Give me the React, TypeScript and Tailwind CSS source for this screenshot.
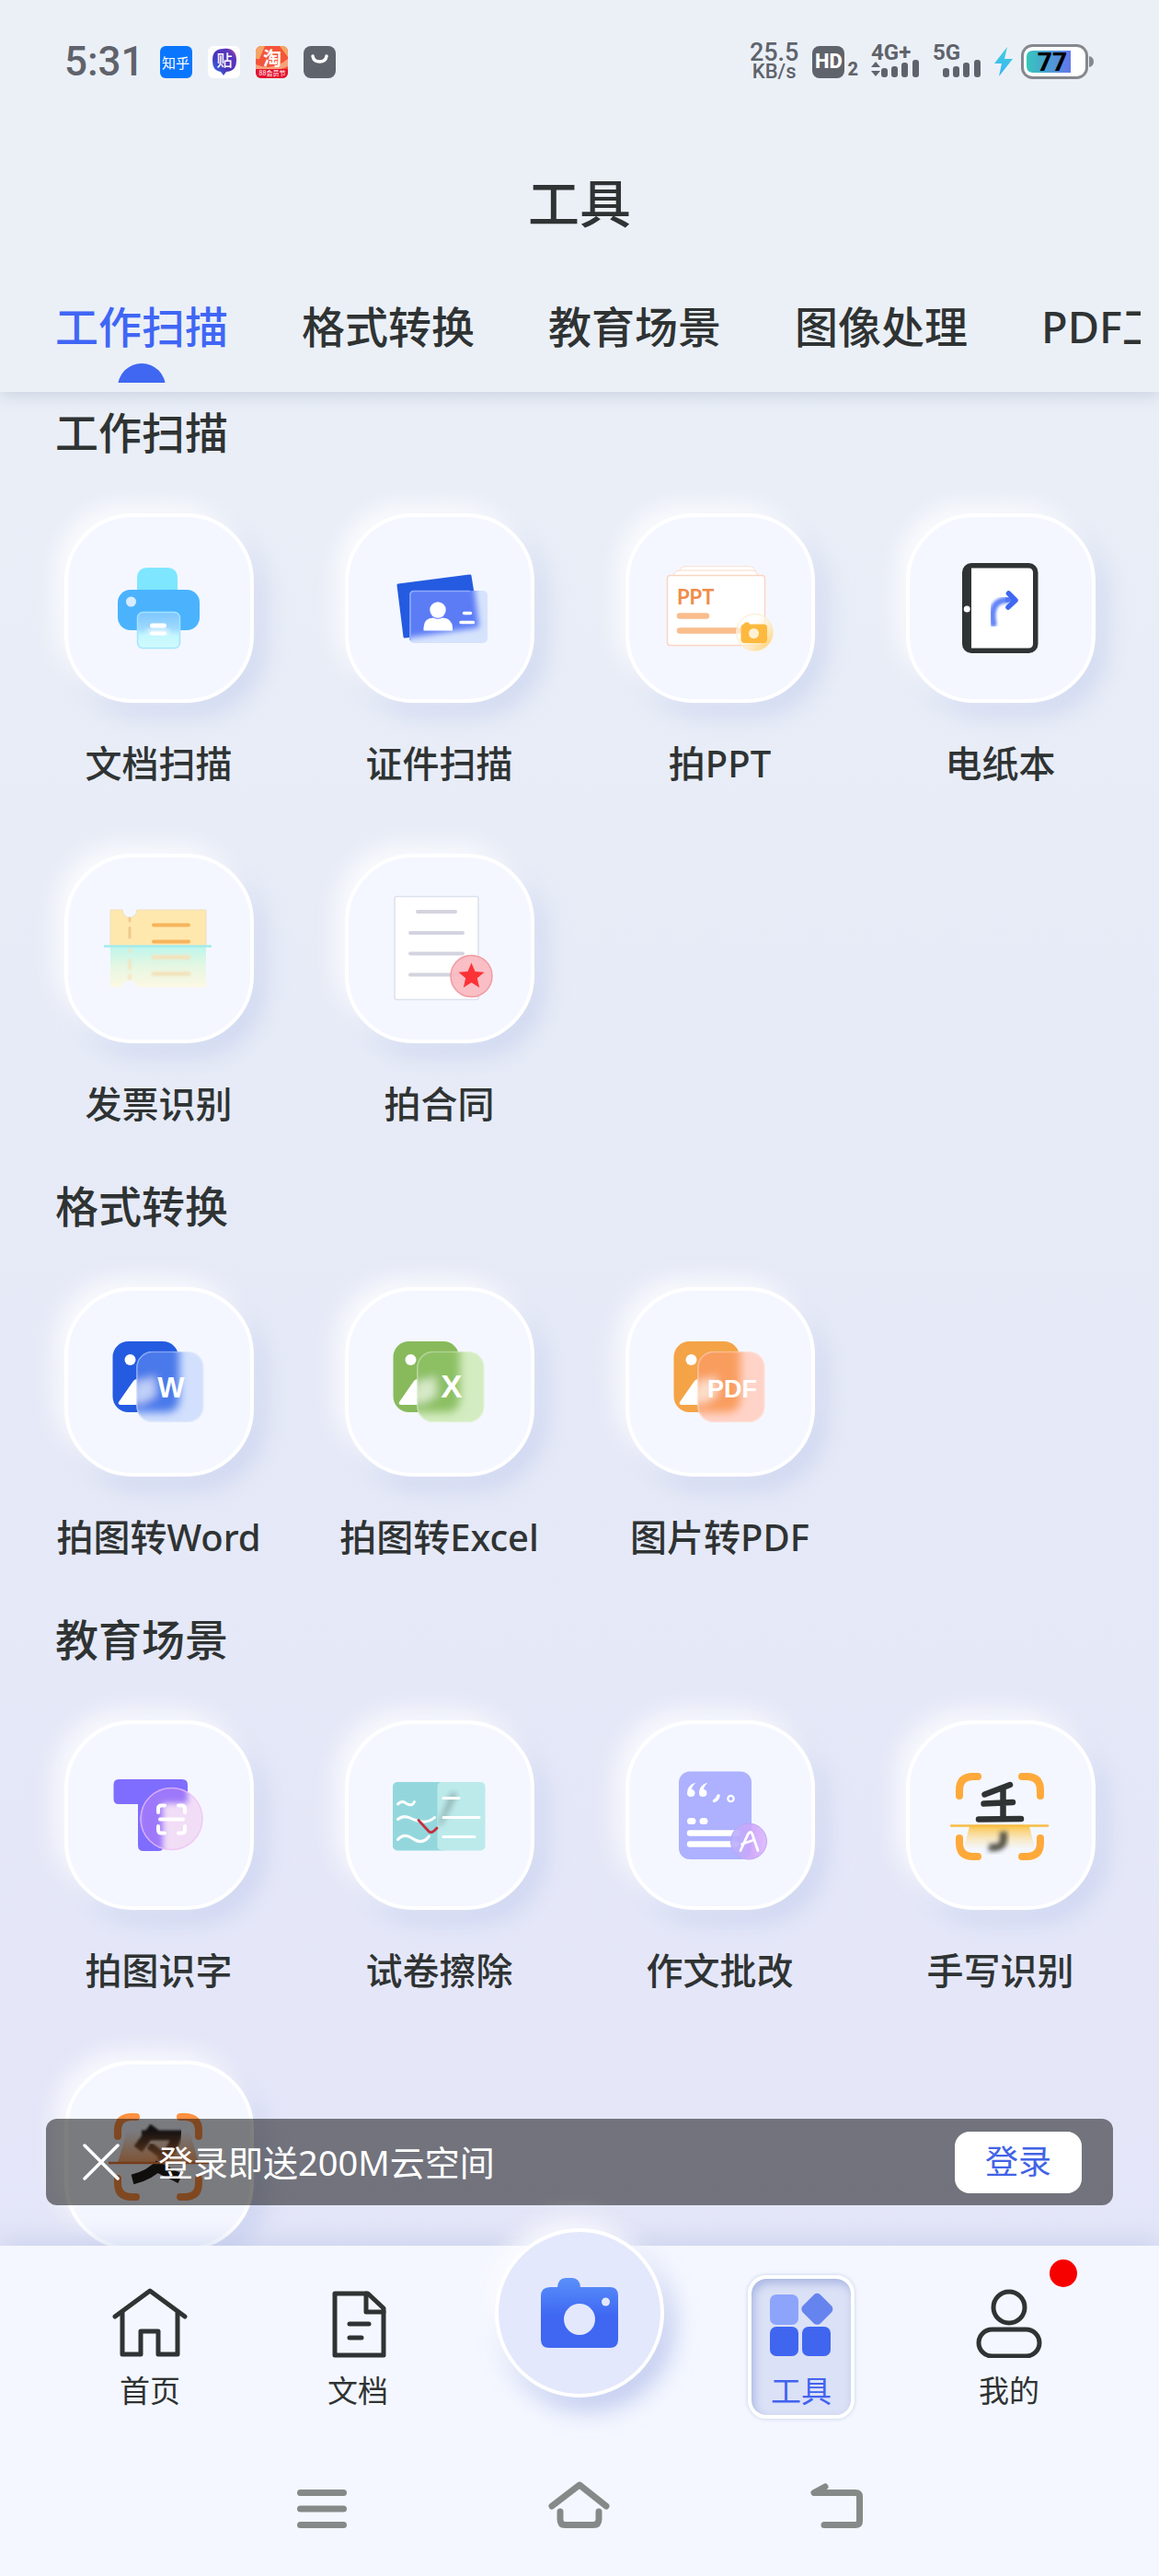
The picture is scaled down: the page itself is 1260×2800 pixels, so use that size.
import React, { useState } from 'react';

interface Tool {
  label?: string;
  icon: React.ReactNode;
}

interface Section {
  title: string;
  tools: Tool[];
}

/* ---------- Tool icons, all drawn on a 206 x 206 tile ---------- */

function TileSvg({ children }: { children: React.ReactNode }) {
  return (
    <svg viewBox="0 0 206 206" className="w-[206px] h-[206px] shrink-0" aria-hidden="true">
      {children}
    </svg>
  );
}

function PrinterIcon() {
  return (
    <TileSvg>
      <defs>
        <linearGradient id="printer-glass" x1="0" y1="0" x2="0" y2="1">
          <stop offset="0" stopColor="#7cc6fd" />
          <stop offset="0.45" stopColor="#9ed9fe" />
          <stop offset="0.65" stopColor="#c3f7fe" />
          <stop offset="1" stopColor="#d0fbfd" />
        </linearGradient>
        <filter id="printer-blur"><feGaussianBlur stdDeviation="3" /></filter>
      </defs>
      <path d="M79 86V71Q79 59 91 59H111Q123 59 123 71V86Z" fill="#7ee6ff" />
      <rect x="58" y="83" width="89" height="44" rx="14" fill="#4bb3fe" />
      <circle cx="72.5" cy="96" r="5.5" fill="#d8ecff" />
      <rect x="79.5" y="107.5" width="46" height="39" rx="6" fill="url(#printer-glass)" stroke="#a5e2ff" strokeWidth="1.5" />
      <rect x="90" y="125" width="24" height="7" rx="3" fill="#fff" fillOpacity="0.7" filter="url(#printer-blur)" />
      <rect x="93" y="119.500" width="18" height="5" rx="2.5" fill="#fff" />
      <rect x="93" y="128.500" width="18" height="4" rx="2" fill="#fff" />
    </TileSvg>
  );
}

function IdCardIcon() {
  return (
    <TileSvg>
      <defs>
        <clipPath id="id-clip"><rect x="70" y="84" width="85" height="57" rx="5" /></clipPath>
        <filter id="id-blur"><feGaussianBlur stdDeviation="3" /></filter>
      </defs>
      <path d="M58 78L136 68L145 124L65 134Z" fill="#245be0" stroke="#245be0" strokeWidth="3" strokeLinejoin="round" />
      <rect x="70" y="84" width="85" height="57" rx="5" fill="#d6e3fc" />
      <g clipPath="url(#id-clip)">
        <path d="M56 78L138 60L146 124L64 136Z" fill="#5b7bf6" filter="url(#id-blur)" />
      </g>
      <path d="M71 138V89Q71 84.500 75 84.500H136" fill="none" stroke="#8ea9fb" strokeWidth="1.5" />
      <circle cx="101" cy="105" r="8.700" fill="#fff" />
      <path d="M85.500 127.500V124Q86 113.500 96 113.500Q101 116 106 113.500Q116.500 114 117 124V127.500Z" fill="#fff" />
      <path d="M129.500 108.500H136.500M126 118.500H139.500" stroke="#fff" strokeWidth="3.500" strokeLinecap="round" />
    </TileSvg>
  );
}

function PptIcon() {
  return (
    <TileSvg>
      <defs>
        <linearGradient id="ppt-glass" x1="0.1" y1="0.1" x2="0.9" y2="0.9">
          <stop offset="0.3" stopColor="#fff" stopOpacity="0.6" />
          <stop offset="1" stopColor="#ffd277" />
        </linearGradient>
      </defs>
      <path d="M59 64Q59 57.500 66 57.500H133Q141 57.500 141 64" fill="#fff" stroke="#fbe0d2" />
      <path d="M52 68Q53 62 60 62H137Q143 62 144 68" fill="#fff" stroke="#fbd9c8" />
      <rect x="45.500" y="67.500" width="106" height="76" rx="3" fill="#fff" stroke="#fbd5c4" strokeWidth="1.5" />
      <text x="56" y="98.500" fontSize="22" fontWeight="700" fill="#f08c49" className="font-[Lato,sans-serif]">PPT</text>
      <path d="M59 111.500H88M59 127.500H124" stroke="#fabd8c" strokeWidth="6.500" strokeLinecap="round" />
      <circle cx="140.500" cy="129.500" r="20" fill="url(#ppt-glass)" stroke="#fdebc9" strokeWidth="1" />
      <path d="M128.500 120.500L130 118.500H134L135 120.500H150Q154 120.500 154 124V137Q154 141 150 141H130Q125.500 141 125.500 137V124Q125.500 121 128.500 120.500Z" fill="#fdb93e" />
      <circle cx="139.500" cy="130.500" r="5.500" fill="#fff1d4" />
    </TileSvg>
  );
}

function PaperPadIcon() {
  return (
    <TileSvg>
      <defs>
        <filter id="pad-blur"><feGaussianBlur stdDeviation="1.6" /></filter>
      </defs>
      <rect x="61" y="54" width="82.500" height="98" rx="10" fill="#2f3333" />
      <path d="M71 59.500H133Q138 59.500 138 64.500V141.500Q138 146.500 133 146.500H71Z" fill="#fff" />
      <circle cx="66.200" cy="104" r="3.500" fill="#fff" />
      <path d="M95 120Q90 95 110 94" fill="none" stroke="#6284f6" strokeWidth="7" strokeLinecap="round" filter="url(#pad-blur)" />
      <path d="M108 94H117" stroke="#5377f4" strokeWidth="5" />
      <path d="M111.500 87L119 94.500L111 102" fill="none" stroke="#3f67f2" strokeWidth="5.500" strokeLinecap="round" strokeLinejoin="round" />
    </TileSvg>
  );
}

function InvoiceIcon() {
  return (
    <TileSvg>
      <defs>
        <linearGradient id="invoice-fade" x1="0" y1="0" x2="0" y2="1">
          <stop offset="0" stopColor="#bff5ec" />
          <stop offset="0.5" stopColor="#e6f7e2" />
          <stop offset="1" stopColor="#fdf8e3" />
        </linearGradient>
        <filter id="invoice-blur"><feGaussianBlur stdDeviation="1.2" /></filter>
      </defs>
      <path d="M50 61H63Q64 69 71 69.500Q78 69 79 61H154V100H50Z" fill="#ffe8ae" stroke="#eedfc0" strokeWidth="1" />
      <path d="M71 70V73M71 80.500V91" stroke="#f0c98e" strokeWidth="3" strokeLinecap="round" />
      <path d="M97 77.500H135M97 95.500H135" stroke="#f6b45c" strokeWidth="4" strokeLinecap="round" />
      <path d="M50 101H154V145H79Q77 137 71 137Q65 137 63 145H50Z" fill="url(#invoice-fade)" />
      <g filter="url(#invoice-blur)" stroke="#f3e3bd" strokeLinecap="round">
        <path d="M97 112.500H135M97 130.500H135" strokeWidth="5" />
        <path d="M71 104V106M71 116V125M71 132V136" strokeWidth="3" />
      </g>
      <path d="M43 100.500H160" stroke="#a3ebec" strokeWidth="2.500" />
    </TileSvg>
  );
}

function ContractIcon() {
  return (
    <TileSvg>
      <rect x="54" y="46.500" width="91" height="112" rx="2" fill="#fff" stroke="#dce1ee" strokeWidth="1.5" />
      <path d="M79 63H120M71 86H128M71 108.500H128M71 131.500H122" stroke="#d3d4df" strokeWidth="4" strokeLinecap="round" />
      <circle cx="137.500" cy="133" r="22.500" fill="#fab9c0" fillOpacity="0.92" stroke="#f29aa1" strokeWidth="1.5" />
      <path d="M137.500 118.500L141.500 128L151.500 128.800L143.800 135.300L146.200 145.500L137.500 140L128.800 145.500L131.200 135.300L123.500 128.800L133.500 128Z" fill="#fb3336" />
    </TileSvg>
  );
}

interface ConvertIconProps {
  id: string;
  base: string;
  glass: string;
  overlap: string;
  text: string;
  size: number;
}

function ConvertIcon({ id, base, glass, overlap, text, size }: ConvertIconProps) {
  return (
    <TileSvg>
      <defs>
        <clipPath id={`${id}-clip`}><rect x="78.500" y="70" width="73" height="77" rx="17" /></clipPath>
        <clipPath id={`${id}-left`}><rect x="50" y="50" width="29" height="100" /></clipPath>
        <filter id={`${id}-blur`} x="-30%" y="-30%" width="160%" height="160%"><feGaussianBlur stdDeviation="5" /></filter>
      </defs>
      <rect x="52.500" y="59" width="71.500" height="77" rx="17" fill={base} />
      <circle cx="71.500" cy="79" r="6" fill="#fff" />
      <path clipPath={`url(#${id}-left)`} d="M59 125L75 102Q78 98 82 103L95 128H61Q58 128 59 125Z" fill="#fff" />
      <rect x="78.500" y="70" width="73" height="77" rx="17" fill={glass} />
      <g clipPath={`url(#${id}-clip)`}>
        <g filter={`url(#${id}-blur)`}>
          <path d="M50 50H125V120Q125 136 110 136H50Z" fill={overlap} />
          <path d="M70 124L80 100L88 102L98 96L100 118L84 127Z" fill="#fff" fillOpacity="0.65" />
        </g>
      </g>
      <rect x="79" y="70.500" width="72" height="76" rx="17" fill="none" stroke="#fff" strokeOpacity="0.3" strokeWidth="1.500" />
      <text x="116" y="120" textAnchor="middle" fontSize={size} fontWeight="700" fill="#fff" className="font-['Liberation_Sans',sans-serif]">{text}</text>
    </TileSvg>
  );
}

function TextScanIcon() {
  return (
    <TileSvg>
      <defs>
        <clipPath id="ocr-clip"><circle cx="116.500" cy="107" r="34" /></clipPath>
        <filter id="ocr-blur"><feGaussianBlur stdDeviation="3" /></filter>
      </defs>
      <path d="M59 64H128Q134 64 134 70V85Q134 91 128 91H108V136Q108 142 102 142H86Q80 142 80 136V91H59Q53.500 91 53.500 85V70Q53.500 64 59 64Z" fill="#7f6dff" />
      <circle cx="116.500" cy="107" r="34" fill="#f2ddf7" />
      <g clipPath="url(#ocr-clip)">
        <path d="M54 64H134V90H107V146H80V90H54Z" fill="#9d78fa" filter="url(#ocr-blur)" />
      </g>
      <circle cx="116.500" cy="107" r="33.500" fill="none" stroke="#f0bdf2" strokeOpacity="0.7" strokeWidth="1.5" />
      <path d="M102 100V96Q102 92.500 105.500 92.500H109M124 92.500H127.500Q131 92.500 131 96V100M131 115V119Q131 122.500 127.500 122.500H124M109 122.500H105.500Q102 122.500 102 119V115" fill="none" stroke="#fff" strokeWidth="4" strokeLinecap="round" />
      <path d="M104 107.500H129" stroke="#fff" strokeWidth="4" strokeLinecap="round" />
    </TileSvg>
  );
}

function ExamIcon() {
  return (
    <TileSvg>
      <defs>
        <clipPath id="exam-clip"><rect x="101" y="67" width="51" height="74" /></clipPath>
        <filter id="exam-blur"><feGaussianBlur stdDeviation="3" /></filter>
      </defs>
      <rect x="52" y="67" width="60" height="74.500" rx="5" fill="#93d7dd" />
      <rect x="100.500" y="67" width="52" height="74.500" rx="5" fill="#bceaeb" />
      <g clipPath="url(#exam-clip)">
        <path d="M100 116L116 78L122 80L106 112Z" fill="#7f9a9c" fillOpacity="0.8" filter="url(#exam-blur)" />
      </g>
      <g fill="none" stroke="#fff" strokeWidth="3" strokeLinecap="round">
        <path d="M57.500 91Q62 86 67 90.500Q73 94 75.500 88.500" />
        <path d="M57.500 107.500Q64 102 73 107Q88 114 97.500 105.500" />
        <path d="M57.500 129.500Q64 122 73 128Q84 136 91.500 126" />
        <path d="M107 84.500H124M107 105.500H146M107 126.500H141" />
      </g>
      <path d="M80 108.500L91 120.500Q94 124 100 117" fill="none" stroke="#c5303f" strokeWidth="2.800" strokeLinecap="round" />
    </TileSvg>
  );
}

function EssayIcon() {
  return (
    <TileSvg>
      <defs>
        <linearGradient id="essay-glass" x1="0" y1="0" x2="1" y2="0">
          <stop offset="0.1" stopColor="#b9b0fd" />
          <stop offset="0.6" stopColor="#cda4fb" />
          <stop offset="1" stopColor="#deb8fc" />
        </linearGradient>
      </defs>
      <rect x="58" y="55.500" width="79" height="95.500" rx="12" fill="#adb1ff" />
      <path d="M75 68Q67 71 67 79Q67 83 71 83Q75.500 83 75.500 79Q75.500 75.500 72 75Q72.500 71 76 68.500Z" fill="#fff" />
      <path d="M88 68Q80 71 80 79Q80 83 84 83Q88.500 83 88.500 79Q88.500 75.500 85 75Q85.500 71 89 68.500Z" fill="#fff" />
      <path d="M101 82Q100 86 96.500 87.500" fill="none" stroke="#fff" strokeWidth="3.500" strokeLinecap="round" />
      <circle cx="114.500" cy="85" r="3.200" fill="none" stroke="#fff" strokeWidth="2.200" />
      <path d="M70.500 109.500H73M84 109.500H86" stroke="#fff" strokeWidth="7" strokeLinecap="round" />
      <path d="M70 122.500H122M70 134.500H120" stroke="#fff" strokeWidth="6.500" strokeLinecap="round" />
      <circle cx="134" cy="131.500" r="19.500" fill="url(#essay-glass)" fillOpacity="0.9" stroke="#bda2f5" strokeWidth="1" />
      <path d="M125 141.500L133 124Q136 119 138 124L144 141.500M126.500 134.500L138 130.500" fill="none" stroke="#fff" strokeWidth="2.800" strokeLinecap="round" />
    </TileSvg>
  );
}

function Brackets({ color }: { color: string }) {
  return (
    <path
      d="M58 82V76Q58 61 73 61H78M126 61H131Q146 61 146 76V82M146 128V133Q146 148 131 148H126M78 148H73Q58 148 58 133V128"
      fill="none"
      stroke={color}
      strokeWidth="8"
      strokeLinecap="round"
    />
  );
}

function HandwritingIcon() {
  return (
    <TileSvg>
      <defs>
        <linearGradient id="hand-glow" x1="0" y1="0" x2="0" y2="1">
          <stop offset="0" stopColor="#fbc64e" />
          <stop offset="1" stopColor="#fbe3a8" stopOpacity="0.1" />
        </linearGradient>
        <filter id="hand-blur" x="-40%" y="-40%" width="180%" height="180%"><feGaussianBlur stdDeviation="2.5" /></filter>
      </defs>
      <path d="M69 115H134L140 139H63Z" fill="url(#hand-glow)" />
      <Brackets color="#ffa93a" />
      <path d="M85.500 80.500L113 70M84.500 90.500L116 89M105.500 74V105M79 107.500L125 107" fill="none" stroke="#2f3333" strokeWidth="6.500" strokeLinecap="round" />
      <path d="M106 121V129Q106 140 90 138" fill="none" stroke="#3a3a2e" strokeOpacity="0.85" strokeWidth="8" filter="url(#hand-blur)" />
      <path d="M49 114.500H154" stroke="#f8bd45" strokeWidth="2.500" strokeLinecap="round" />
    </TileSvg>
  );
}

function GlyphScanIcon() {
  return (
    <TileSvg>
      <defs>
        <linearGradient id="glyph-glow" x1="0" y1="0" x2="0" y2="1">
          <stop offset="0" stopColor="#ff9142" stopOpacity="0" />
          <stop offset="1" stopColor="#ff9142" stopOpacity="0.8" />
        </linearGradient>
        <filter id="glyph-blur"><feGaussianBlur stdDeviation="1.2" /></filter>
      </defs>
      <Brackets color="#ff9142" />
      <path d="M98 72L80 96M84 81H122Q118 98 104 110" fill="none" stroke="#2b2320" strokeWidth="11" filter="url(#glyph-blur)" />
      <path d="M92 92L108 104" stroke="#2b2320" strokeWidth="8" filter="url(#glyph-blur)" />
      <path d="M68 76H136L146 111H58Z" fill="url(#glyph-glow)" />
      <path d="M104 112Q94 124 74 129M98 114L126 128" fill="none" stroke="#1f1c1b" strokeWidth="11" />
      <path d="M48 111H158" stroke="#e87b35" strokeWidth="2.500" />
    </TileSvg>
  );
}

/* ---------- Data ---------- */

const tabs = ['工作扫描', '格式转换', '教育场景', '图像处理', 'PDF工具'];

const sections: Section[] = [
  {
    title: '工作扫描',
    tools: [
      { label: '文档扫描', icon: <PrinterIcon /> },
      { label: '证件扫描', icon: <IdCardIcon /> },
      { label: '拍PPT', icon: <PptIcon /> },
      { label: '电纸本', icon: <PaperPadIcon /> },
      { label: '发票识别', icon: <InvoiceIcon /> },
      { label: '拍合同', icon: <ContractIcon /> },
    ],
  },
  {
    title: '格式转换',
    tools: [
      { label: '拍图转Word', icon: <ConvertIcon id="word" base="#245be0" glass="#d2e0fd" overlap="#4a79ea" text="W" size={31} /> },
      { label: '拍图转Excel', icon: <ConvertIcon id="excel" base="#88ba5c" glass="#d3ecc1" overlap="#8cc063" text="X" size={35} /> },
      { label: '图片转PDF', icon: <ConvertIcon id="pdf" base="#f4a447" glass="#ffd3c8" overlap="#f99d5f" text="PDF" size={27} /> },
    ],
  },
  {
    title: '教育场景',
    tools: [
      { label: '拍图识字', icon: <TextScanIcon /> },
      { label: '试卷擦除', icon: <ExamIcon /> },
      { label: '作文批改', icon: <EssayIcon /> },
      { label: '手写识别', icon: <HandwritingIcon /> },
      { icon: <GlyphScanIcon /> },
    ],
  },
];

/* ---------- Status bar ---------- */

function SignalBars({ arrows }: { arrows?: boolean }) {
  return (
    <svg viewBox="0 0 52 20" className="w-[52px] h-5" fill="#5f636b" aria-hidden="true">
      {arrows && <path d="M0 8L5 2L10 8ZM0 12H10L5 18Z" />}
      <rect x="11" y="9" width="7" height="10" rx="3" />
      <rect x="22" y="7" width="7" height="12" rx="3" />
      <rect x="33" y="3" width="7" height="16" rx="3" />
      <rect x="45" y="0" width="7" height="19" rx="3" />
    </svg>
  );
}

function StatusBar() {
  return (
    <div className="h-[134px] px-[70px] flex items-center justify-between text-[#5f636b] font-[Roboto,sans-serif]">
      <div className="flex items-center gap-[17px]">
        <span className="text-[44px] leading-none font-medium">5:31</span>
        <span className="w-[35px] h-[35px] rounded-md bg-[#0a76ff] text-white text-[15px] leading-none flex items-center justify-center font-['Noto_Sans_CJK_SC',sans-serif]">
          知乎
        </span>
        <span className="w-[35px] h-[35px] rounded-md bg-white flex items-center justify-center">
          <svg viewBox="0 0 35 35" className="w-[35px] h-[35px]">
            <defs>
              <linearGradient id="tieba" x1="0" y1="1" x2="1" y2="0">
                <stop offset="0" stopColor="#2f7bf5" />
                <stop offset="0.4" stopColor="#4b35b8" />
                <stop offset="0.8" stopColor="#5a36c0" />
                <stop offset="1" stopColor="#f2626e" />
              </linearGradient>
            </defs>
            <path d="M17 3C26 2 31 6 31 15C31 25 27 27 20 28L17 32L14 28C8 27 5 24 5 15C5 7 9 3 17 3Z" fill="url(#tieba)" />
            <text x="18" y="22" fontSize="17" fontWeight="500" textAnchor="middle" fill="#fff" className="font-['Noto_Sans_CJK_SC',sans-serif]">贴</text>
          </svg>
        </span>
        <span className="w-[35px] h-[35px] rounded-md overflow-hidden">
          <svg viewBox="0 0 35 35" className="w-[35px] h-[35px]">
            <rect width="35" height="35" fill="#f4553a" />
            <path d="M0 0H10L4 14H0ZM26 0H35V12Z" fill="#f5a565" />
            <path d="M0 20Q18 28 35 14V22Q18 30 0 26Z" fill="#f8a27c" />
            <rect y="25" width="35" height="10" fill="#e4142f" />
            <text x="18" y="21" fontSize="20" fontWeight="700" textAnchor="middle" fill="#fff" className="font-['Noto_Sans_CJK_SC',sans-serif]">淘</text>
            <text x="18" y="32" fontSize="7" textAnchor="middle" fill="#fff" className="font-['Noto_Sans_CJK_SC',sans-serif]">88会员节</text>
          </svg>
        </span>
        <span className="w-[35px] h-[35px] rounded-lg bg-[#5f636b]">
          <svg viewBox="0 0 35 35" className="w-[35px] h-[35px]">
            <path d="M10 11Q11 17 17.500 17Q24 17 25 11" fill="none" stroke="#fff" strokeWidth="3.500" strokeLinecap="round" />
          </svg>
        </span>
      </div>

      <div className="flex items-center">
        <div className="flex flex-col items-center font-medium mr-[15px]">
          <span className="text-[27px] leading-[22px]">25.5</span>
          <span className="text-[22px] leading-5">KB/s</span>
        </div>
        <div className="flex items-end mr-[14px]">
          <span className="w-[35px] h-[35px] rounded-lg bg-[#5f636b] text-white text-[22px] leading-none font-extrabold flex items-center justify-center">HD</span>
          <span className="ml-[3px] text-[20px] leading-5 font-extrabold">2</span>
        </div>
        <div className="flex flex-col mr-[15px]">
          <span className="text-[24px] leading-4 font-bold">4G+</span>
          <SignalBars arrows />
        </div>
        <div className="flex flex-col mr-[15px]">
          <span className="text-[24px] leading-4 font-bold">5G</span>
          <SignalBars />
        </div>
        <svg viewBox="0 0 20 32" className="w-5 h-8 mr-[9px]">
          <defs>
            <linearGradient id="bolt" x1="0" y1="0" x2="0" y2="1">
              <stop offset="0" stopColor="#41cfd8" />
              <stop offset="1" stopColor="#36b3fb" />
            </linearGradient>
          </defs>
          <path d="M14 0L0 18H8L5 32L20 13H11Z" fill="url(#bolt)" />
        </svg>
        <svg viewBox="0 0 80 38" className="w-20 h-[38px]">
          <defs>
            <linearGradient id="battery" x1="0" y1="0" x2="1" y2="0">
              <stop offset="0" stopColor="#35c6bc" />
              <stop offset="1" stopColor="#6376ea" />
            </linearGradient>
          </defs>
          <rect x="1.500" y="1.500" width="70" height="35" rx="11" fill="#fff" stroke="#85888e" strokeWidth="3" />
          <path d="M13 7H54V31H13Q6 31 6 24V14Q6 7 13 7Z" fill="url(#battery)" />
          <path d="M74 13Q79 14 79 19Q79 24 74 25Z" fill="#85888e" />
          <text x="34" y="29" fontSize="28" fontWeight="800" textAnchor="middle" fill="#000">77</text>
        </svg>
      </div>
    </div>
  );
}

/* ---------- Content ---------- */

function ToolButton({ tool }: { tool: Tool }) {
  return (
    <button type="button" className="flex flex-col items-center">
      <span className="w-[206px] h-[206px] flex items-center justify-center rounded-[74px] border-4 border-white bg-[#f4f7ff] shadow-[-10px_-10px_26px_rgba(255,255,255,0.8),12px_14px_24px_rgba(176,190,232,0.4)]">
        {tool.icon}
      </span>
      {tool.label && <span className="mt-[34px] text-[40px] leading-[64px] font-medium whitespace-nowrap">{tool.label}</span>}
    </button>
  );
}

function LoginBanner({ onClose }: { onClose: () => void }) {
  return (
    <div className="absolute inset-x-[50px] bottom-11 h-[94px] pl-10 pr-[34px] flex items-center rounded-xl bg-black/50 text-white">
      <button type="button" aria-label="关闭" onClick={onClose}>
        <svg viewBox="0 0 40 40" className="w-10 h-10" fill="none" stroke="currentColor" strokeWidth="3.500" strokeLinecap="round">
          <path d="M2 2L38 38M38 2L2 38" />
        </svg>
      </button>
      <p className="ml-[42px] flex-1 text-[38px] leading-[60px]">登录即送200M云空间</p>
      <button type="button" className="w-[138px] h-[67px] rounded-2xl bg-white text-[#4263e6] text-[36px] leading-none">
        登录
      </button>
    </div>
  );
}

/* ---------- Bottom navigation ---------- */

function HomeIcon() {
  return (
    <svg viewBox="0 0 82 76" className="w-[82px] h-[76px]" fill="none" stroke="#2f3333" strokeWidth="5" strokeLinecap="round" strokeLinejoin="round">
      <path d="M3 31L41 3L79 31" />
      <path d="M11 27V72H31V47H50V72H71V27" />
    </svg>
  );
}

function DocIcon() {
  return (
    <svg viewBox="0 0 82 76" className="w-[82px] h-[76px]" fill="none" stroke="#2f3333" strokeWidth="5" strokeLinecap="round" strokeLinejoin="round">
      <path d="M16 6H52L69 22V73H16Z" />
      <path d="M50 6V26H69" />
      <path d="M32 39H53M32 54H45" />
    </svg>
  );
}

function ToolsIcon() {
  return (
    <svg viewBox="0 0 82 76" className="w-[82px] h-[76px]">
      <rect x="7" y="7" width="31" height="33" rx="7" fill="#8da4fb" />
      <rect x="45" y="9" width="27" height="27" rx="5" fill="#6584ee" transform="rotate(45 58 22.500)" />
      <rect x="7" y="42" width="31" height="32" rx="7" fill="#4066f0" />
      <rect x="42" y="42" width="31" height="32" rx="7" fill="#4066f0" />
    </svg>
  );
}

function UserIcon() {
  return (
    <svg viewBox="0 0 82 76" className="w-[82px] h-[76px]" fill="none" stroke="#2f3333" strokeWidth="5">
      <circle cx="41" cy="21" r="17" />
      <rect x="8" y="45" width="66" height="29" rx="14.500" />
    </svg>
  );
}

interface NavItemProps {
  label: string;
  icon: React.ReactNode;
  active?: boolean;
  badge?: boolean;
}

function NavItem({ label, icon, active, badge }: NavItemProps) {
  return (
    <div className="flex-1 flex justify-center">
      <button
        type="button"
        className={
          active
            ? 'relative w-[116px] h-[156px] flex flex-col items-center rounded-[20px] border-4 border-white bg-[#dbe1f6] text-[#4263f0] shadow-[0_0_4px_rgba(190,200,225,0.9),inset_3px_5px_10px_rgba(150,165,220,0.7)]'
            : 'relative w-[116px] h-[156px] flex flex-col items-center border-4 border-transparent'
        }
      >
        <span className="mt-[10px]">{icon}</span>
        <span className="mt-[12px] text-[33px] leading-[48px] whitespace-nowrap">{label}</span>
        {badge && <span className="absolute -right-5 -top-[21px] w-[30px] h-[30px] rounded-full bg-[#f70000]" />}
      </button>
    </div>
  );
}

function BottomNav() {
  return (
    <footer className="relative bg-[#f4f7ff] shadow-[0_-4px_24px_rgba(176,190,225,0.5)]">
      <nav className="flex items-start pt-8 px-[50px]">
        <NavItem label="首页" icon={<HomeIcon />} />
        <NavItem label="文档" icon={<DocIcon />} />
        <div className="w-64 flex justify-center">
          <button
            type="button"
            aria-label="拍照"
            className="-mt-[51px] w-[184px] h-[184px] flex items-center justify-center rounded-full border-4 border-white bg-[#e4e8fc] shadow-[-6px_-10px_24px_rgba(255,255,255,0.8),10px_14px_26px_rgba(150,165,225,0.55)]"
          >
            <svg viewBox="0 0 84 76" className="w-[84px] h-[76px]">
              <defs>
                <linearGradient id="camera" x1="0" y1="0" x2="0" y2="1">
                  <stop offset="0" stopColor="#5990fa" />
                  <stop offset="0.55" stopColor="#3f67f2" />
                </linearGradient>
              </defs>
              <path d="M10 10H18Q19 0 27 0H34Q42 0 43 10H75Q84 10 84 19V67Q84 76 75 76H9Q0 76 0 67V20Q0 10 10 10Z" fill="url(#camera)" />
              <circle cx="42" cy="45" r="17" fill="#e4e8fc" />
              <circle cx="70.500" cy="26" r="4.500" fill="#e4e8fc" />
            </svg>
          </button>
        </div>
        <NavItem label="工具" icon={<ToolsIcon />} active />
        <NavItem label="我的" icon={<UserIcon />} badge />
      </nav>

      {/* Android system keys */}
      <div className="grid grid-cols-3 justify-items-center px-[210px] pt-[68px] pb-[49px]">
        <button type="button" aria-label="最近任务">
          <svg viewBox="0 0 68 54" className="w-[68px] h-[54px]" stroke="#858a89" strokeWidth="7" strokeLinecap="round">
            <path d="M10.500 12.500H57.500M10.500 30H57.500M10.500 47.500H57.500" />
          </svg>
        </button>
        <button type="button" aria-label="主屏幕">
          <svg viewBox="0 0 68 54" className="w-[68px] h-[54px]" fill="none" stroke="#858a89" strokeWidth="7" strokeLinecap="round" strokeLinejoin="round">
            <path d="M4 27L34 4L63 27" />
            <path d="M13 33V41Q13 47.500 18 47.500H49Q55 47.500 55 41V33" />
          </svg>
        </button>
        <button type="button" aria-label="返回">
          <svg viewBox="0 0 68 54" className="w-[68px] h-[54px]" fill="none" stroke="#858a89" strokeWidth="7" strokeLinecap="round" strokeLinejoin="round">
            <path d="M21 6L9 12.500H54Q58.500 12.500 58.500 17V43Q58.500 47.500 54 47.500H20" />
          </svg>
        </button>
      </div>
    </footer>
  );
}

export default function App() {
  const [activeTab, setActiveTab] = useState(0);
  const [showBanner, setShowBanner] = useState(true);

  return (
    <div className="h-screen flex flex-col bg-linear-to-b from-[#ebf0f7] via-[#e6eaf7] to-[#e3e4f9] text-[#2f3333] font-['Noto_Sans','Noto_Sans_CJK_SC',sans-serif]">
      <header className="relative z-10 bg-[#ebf0f7] pb-[10px] shadow-[0_4px_16px_rgba(120,130,155,0.25)]">
        <StatusBar />
        <h1 className="h-[172px] flex items-center justify-center text-[56px] leading-none font-medium">工具</h1>
        <div className="mx-5 overflow-hidden">
          <div className="flex pt-[17px]" role="tablist">
            {tabs.map((tab, index) => (
              <button
                key={tab}
                type="button"
                role="tab"
                aria-selected={activeTab === index}
                onClick={() => setActiveTab(index)}
                className={`px-10 shrink-0 flex flex-col items-center text-[47px] leading-[64px] font-medium whitespace-nowrap ${
                  activeTab === index ? 'text-[#4066f5]' : ''
                }`}
              >
                {tab}
                <svg viewBox="0 0 52 21" className="mt-2 w-[52px] h-[21px]" aria-hidden="true">
                  {activeTab === index && <circle cx="26" cy="26" r="26" fill="#3f67f2" />}
                </svg>
              </button>
            ))}
          </div>
        </div>
      </header>

      <div className="relative flex-1 min-h-0">
        <main className="h-full overflow-hidden px-5 pt-3">
          {sections.map((section) => (
            <section key={section.title} className="mb-[47px]">
              <h2 className="mb-14 px-10 text-[47px] leading-[64px] font-medium">{section.title}</h2>
              <div className="grid grid-cols-4 gap-y-[66px]">
                {section.tools.map((tool, index) => (
                  <ToolButton key={index} tool={tool} />
                ))}
              </div>
            </section>
          ))}
        </main>
        {showBanner && <LoginBanner onClose={() => setShowBanner(false)} />}
      </div>

      <BottomNav />
    </div>
  );
}
